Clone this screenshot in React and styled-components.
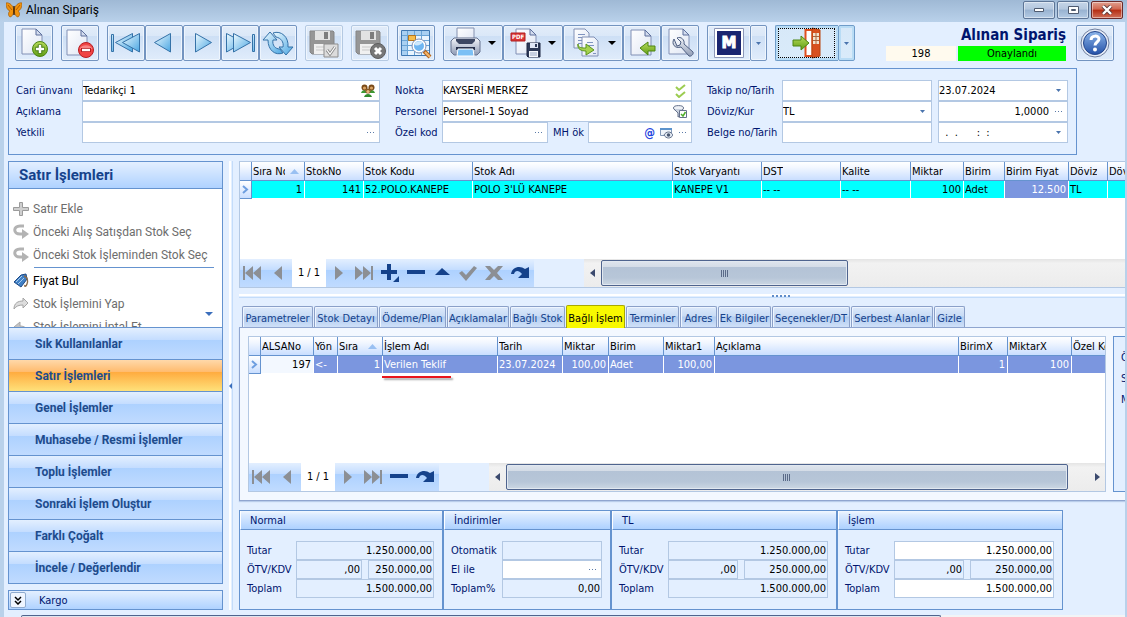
import React from 'react';
import styled, { createGlobalStyle, css } from 'styled-components';

const uiFont = '"DejaVu Sans Condensed", "DejaVu Sans", sans-serif';
const shellFont = 'Roboto, "Noto Sans", sans-serif';

const colors = {
  back: '#e3efff',
  line: '#6593cf',
  field: '#b3c8e3',
  navy: '#00156e',
  frame: '#b9d1ea',
};

const bevel = 'linear-gradient(#e3efff 0%, #c4ddff 38%, #add1ff 39%, #c0dbff 100%)';
const headerFill = 'linear-gradient(#e3efff, #afd2ff)';

const GlobalStyle = createGlobalStyle`
  * { box-sizing: border-box; }
  body {
    margin: 0;
    font: 11px ${uiFont};
    background: ${colors.back};
    overflow: hidden;
  }
  button, input, select { font: inherit; color: inherit; margin: 0; }
  svg { display: block; flex: none; }
`;

const Window = styled.div`
  min-height: 100vh;
  display: flex;
  flex-direction: column;
  background: ${colors.back};
`;

const TitleBar = styled.header`
  height: 22px;
  display: flex;
  align-items: center;
  gap: 4px;
  padding: 0 4px 2px 6px;
  background: linear-gradient(#9fb9d5, #b9d1ea);
  font: 12px ${shellFont};
  color: #000;
`;

const WindowButtons = styled.div`
  margin-left: auto;
  align-self: flex-start;
  display: flex;
  gap: 2px;
  padding-top: 1px;
`;

const WindowButton = styled.button`
  width: 32px;
  height: 18px;
  padding: 0;
  display: flex;
  align-items: center;
  justify-content: center;
  border: 1px solid ${p => (p.$close ? '#6b2a2a' : '#5d7596')};
  border-radius: 2px;
  box-shadow: inset 0 0 0 1px rgba(255, 255, 255, 0.45);
  background: ${p => (p.$close
    ? 'linear-gradient(#e0a090 0%, #d0664f 45%, #b52c12 50%, #d0705a 100%)'
    : 'linear-gradient(#c5d5e8 0%, #b4c7de 45%, #98b2d0 50%, #b4cbe4 100%)')};
`;

const Frame = styled.div`
  flex: 1;
  display: flex;
  flex-direction: column;
  min-width: 0;
  border-left: 4px solid ${colors.frame};
  border-right: 2px solid ${colors.frame};
`;

const Toolbar = styled.div`
  display: flex;
  gap: 8px;
  padding: 3px 11px 7px;
`;

const ToolGroup = styled.div`
  display: flex;
`;

const ToolButton = styled.button`
  width: ${p => p.$width || 38}px;
  height: 36px;
  padding: 0;
  display: flex;
  align-items: center;
  justify-content: center;
  gap: 6px;
  border: 1px solid #7394c0;
  border-radius: 2px;
  background: linear-gradient(#e2ecf9 0%, #dbe8f8 28%, #cddff5 29%, #e0ecfb 100%);
  box-shadow: inset 0 0 0 1px #eef5fd;
  &:disabled { border-color: #b4c9e2; }
  ${p => p.$joined && css`
    border-right-width: 0;
    border-radius: 2px 0 0 2px;
  `}
  ${p => p.$hot && css`
    border-color: #6f9cc9;
    background: linear-gradient(#d7e8f8, #d9ebfa);
    box-shadow: inset 0 0 0 2px #b9dcf5;
  `}
  ${p => p.$focus && css`
    outline: 1px dotted #000;
    outline-offset: -4px;
  `}
`;

const OrderState = styled.div`
  margin-left: auto;
  display: grid;
  grid-template-columns: 70px 108px;
  grid-template-rows: 21px 15px;
  column-gap: 2px;
  margin-right: 2px;
  text-align: center;
  line-height: 16px;
  color: #000;
`;

const OrderTitle = styled.h1`
  grid-column: 1 / 3;
  margin: 0;
  text-align: right;
  font: bold 15px/21px ${uiFont};
  color: ${colors.navy};
`;

const StateCell = styled.output`
  background: ${p => p.$fill};
`;

const FormPanel = styled.form`
  margin: 0 48px 0 4px;
  padding: 11px 8px 11px 7px;
  border: 1px solid ${colors.line};
  display: grid;
  grid-template-columns: 66px 298fr 62px 250fr 90px 150fr 6px 130fr;
  grid-auto-rows: 21px;
  color: ${colors.navy};
`;

const Label = styled.label`
  padding-left: ${p => p.$indent || 0}px;
  line-height: ${p => p.$line || 21}px;
  white-space: nowrap;
`;

const FieldBox = styled.div`
  display: flex;
  align-items: center;
  min-width: 0;
  height: ${p => p.$height || 21}px;
  border: 1px solid ${colors.field};
  background: ${p => (p.$readOnly ? 'transparent' : '#fff')};
  padding-right: ${p => (p.$plain ? 1 : 4)}px;
  gap: 5px;
  color: #000;
  grid-column: ${p => p.$column || 'auto'};
`;

const DropBox = styled(FieldBox)`
  padding-right: 6px;
`;

const fieldText = css`
  flex: 1;
  width: 100%;
  min-width: 0;
  height: 100%;
  border: 0;
  outline: 0;
  padding: 0;
  background: transparent;
`;

const TextInput = styled.input`
  ${fieldText}
  text-align: ${p => p.$align || 'left'};
`;

const SelectInput = styled.select`
  ${fieldText}
  appearance: none;
`;

const IconButton = styled.button`
  padding: 0;
  border: 0;
  background: none;
  display: flex;
  align-items: center;
  justify-content: center;
`;

const AtButton = styled(IconButton)`
  font: bold 12px ${uiFont};
  color: #1f45e0;
`;

const CodeRow = styled.div`
  display: grid;
  grid-template-columns: 106fr 40px 104fr;
`;

const Main = styled.main`
  flex: 1;
  display: flex;
  min-height: 0;
  padding: 6px 0 5px 4px;
`;

const Sidebar = styled.aside`
  width: 215px;
  flex: none;
  display: flex;
  flex-direction: column;
`;

const SideBox = styled.section`
  flex: 1;
  display: flex;
  flex-direction: column;
  border: 1px solid ${colors.line};
  background: #fff;
`;

const SideTitle = styled.h2`
  margin: 0;
  padding-left: 10px;
  border-bottom: 1px solid ${colors.line};
  background: ${headerFill};
  font: bold 15px/26px ${shellFont};
  color: #15428b;
`;

const SideList = styled.div`
  position: relative;
  flex: 1 1 0;
  min-height: 138px;
  overflow: hidden;
  padding: 8px 8px 0 4px;
  font: 12px ${shellFont};
`;

const SideItem = styled.button`
  width: 100%;
  height: 23px;
  padding: 0;
  display: flex;
  align-items: center;
  gap: 3px;
  border: 0;
  background: none;
  white-space: nowrap;
  color: #000;
  &:disabled { color: #6d6d6d; }
`;

const SideRule = styled.hr`
  margin: 1px 0 1px 21px;
  border: 0;
  border-top: 1px solid ${colors.line};
`;

const ScrollMore = styled(IconButton)`
  position: absolute;
  right: 9px;
  bottom: 11px;
`;

const SideGroup = styled.button`
  height: 32px;
  padding: 0 0 0 26px;
  border: 0;
  border-top: 1px solid ${colors.line};
  text-align: left;
  font: bold 12px ${shellFont};
  color: #1e4b8c;
  background: ${p => (p.$active
    ? 'linear-gradient(#ffd9aa 0%, #ffbb6e 38%, #ffab3f 39%, #fee17a 100%)'
    : bevel)};
`;

const Cargo = styled.div`
  margin-top: 6px;
  height: 20px;
  padding-left: 1px;
  display: flex;
  align-items: center;
  gap: 13px;
  border: 1px solid ${colors.line};
  background: ${headerFill};
  color: ${colors.navy};
`;

const CargoToggle = styled(IconButton)`
  width: 16px;
  height: 16px;
  border: 1px solid #8fabcf;
  border-radius: 2px;
  background: #eef5ff;
`;

const VSplit = styled.div`
  width: 16px;
  flex: none;
  display: flex;
  align-items: center;
  padding-left: 6px;
`;

const VSplitBar = styled.div`
  width: 4px;
  height: 100%;
  display: flex;
  align-items: center;
  background: linear-gradient(90deg, #fff 2px, #e3efff 2px, #e3efff 3px, #c3dcfa 3px);
`;

const Content = styled.div`
  flex: 1;
  min-width: 0;
  display: flex;
  flex-direction: column;
`;

const GridBox = styled.section`
  flex: 1 1 ${p => p.$basis}px;
  min-width: 0;
  display: flex;
  flex-direction: column;
  border: 1px solid ${colors.field};
  border-right-width: ${p => (p.$open ? 0 : 1)}px;
  background: #fff;
  overflow: hidden;
`;

const GridBody = styled.div`
  flex: 1;
  overflow: hidden;
`;

const Table = styled.table`
  table-layout: fixed;
  width: 100%;
  border-collapse: separate;
  border-spacing: 0;
  color: #000;
`;

const Col = styled.col`
  width: ${p => p.$width}px;
`;

const Th = styled.th`
  height: 19px;
  padding: 0 0 0 1px;
  border-right: 1px solid ${colors.line};
  border-bottom: 1px solid ${colors.line};
  background: linear-gradient(#fff, #f2f7ff 30%, #c9deff);
  font-weight: normal;
  text-align: left;
  white-space: nowrap;
  overflow: hidden;
`;

const HeadCell = styled.span`
  display: flex;
  align-items: center;
  justify-content: space-between;
  gap: 5px;
  padding-right: ${p => (p.$sorted ? 5 : 0)}px;
`;

const HeadText = styled.span`
  overflow: hidden;
`;

const Td = styled.td`
  height: 18px;
  padding: 0 2px 0 1px;
  border-right: 1px solid ${p => (p.$mark ? colors.line : '#fff')};
  border-bottom: 1px solid ${p => (p.$mark ? colors.line : '#fff')};
  background: ${p => p.$fill};
  color: ${p => (p.$light ? '#fff' : '#000')};
  text-align: ${p => p.$align || 'left'};
  white-space: nowrap;
  overflow: hidden;
`;

const RedMark = styled.div`
  width: 69px;
  height: 2px;
  margin: 2px 0 0 133px;
  background: #e8141c;
  box-shadow: 2px 2px 2px rgba(0, 0, 0, 0.35);
`;

const NavRow = styled.div`
  height: 28px;
  flex: none;
  display: flex;
  background: ${colors.back};
`;

const NavButton = styled.button`
  width: 26px;
  height: 28px;
  padding: 0;
  border: 0;
  display: flex;
  align-items: center;
  justify-content: center;
  background: ${bevel};
`;

const NavCount = styled.span`
  width: 34px;
  line-height: 28px;
  text-align: center;
  background: #fff;
  color: #000;
`;

const ScrollTrack = styled.div`
  flex: 1;
  margin-left: 50px;
  display: grid;
  grid-template-columns: 17px ${p => p.$thumb} 1fr;
  align-items: center;
  padding: 1px 0;
  background: linear-gradient(#e4e4e4, #f2f2f2 15%, #ececec);
`;

const ScrollThumb = styled.div`
  height: 26px;
  display: flex;
  align-items: center;
  justify-content: center;
  border: 1px solid #4f648e;
  border-radius: 2px;
  box-shadow: inset 0 0 0 1px #e1e8f0;
  background: linear-gradient(#dfe5ed 0%, #d3dbe6 26%, #b4c3d6 27%, #b7c6d8 70%, #ccd7e3 100%);
`;

const ArrowButton = styled(IconButton)`
  height: 26px;
  justify-self: ${p => (p.$end ? 'end' : 'stretch')};
  padding: 0 ${p => (p.$end ? 5 : 0)}px;
`;

const HSplit = styled.div`
  height: 17px;
  flex: none;
  padding-top: 6px;
`;

const HSplitBar = styled.div`
  height: 4px;
  display: flex;
  justify-content: center;
  padding-left: 198px;
  background: linear-gradient(#fff 2px, #e3efff 2px, #e3efff 3px, #c3dcfa 3px);
`;

const TabRow = styled.div`
  height: 22px;
  flex: none;
  display: flex;
  align-items: flex-end;
  padding-left: 3px;
`;

const Tab = styled.button`
  width: ${p => p.$width}px;
  height: 21px;
  margin-right: 1px;
  padding: 2px 0 0;
  flex: none;
  white-space: nowrap;
  border: 1px solid #8ba0c8;
  border-bottom: 0;
  border-radius: 2px 2px 0 0;
  box-shadow: inset 1px 1px 0 #eef5ff;
  background: linear-gradient(#dce9fa 0%, #c8dbf5 45%, #b1ccf0 50%, #cfe0f8 100%);
  color: #15428b;
  ${p => p.$active && css`
    position: relative;
    z-index: 1;
    height: 23px;
    margin-bottom: -1px;
    border-color: #a9a900;
    box-shadow: none;
    background: #f8f800;
    color: #000;
  `}
`;

const DetailPanel = styled.div`
  flex: 1 1 174px;
  min-height: 0;
  display: flex;
  gap: 7px;
  padding: 8px 0 8px 8px;
  border: 1px solid #8fa5cf;
  border-right: 0;
  background: #f3f8ff;
  box-shadow: 0 1px 1px #b9cdea;
`;

const SidePeek = styled.div`
  width: 12px;
  flex: none;
  overflow: hidden;
  padding: 10px 0 0 7px;
  border: 1px solid ${colors.line};
  border-right: 0;
  background: ${colors.back};
  color: ${colors.navy};
  line-height: 21px;
`;

const Totals = styled.div`
  flex: none;
  margin: 9px 62px 0 0;
  display: grid;
  grid-template-columns: 204fr 168fr 226fr 226fr;
`;

const TotalBox = styled.fieldset`
  min-width: 0;
  height: 100px;
  margin: 0;
  padding: 0;
  border: 1px solid ${colors.line};
  color: ${colors.navy};
`;

const TotalHead = styled.div`
  height: 19px;
  padding-left: 9px;
  line-height: 19px;
  border-bottom: 1px solid ${colors.line};
  border-left: 1px solid #fff;
  background: linear-gradient(#f2f8ff, #dcebff 20%, #add1ff);
`;

const TotalRows = styled.div`
  display: grid;
  grid-template-columns: ${p => p.$label}px 1fr;
  grid-auto-rows: 19px;
  padding: 11px 8px 11px 7px;
`;

const SplitFields = styled.div`
  display: grid;
  grid-template-columns: ${p => p.$first}fr ${p => p.$second}fr;
  column-gap: 6px;
`;

const BottomScroll = styled.div`
  height: 2px;
  margin-left: 17px;
  display: grid;
  grid-template-columns: 919fr 184fr;
  background: #f2f4f6;
`;

const BottomThumb = styled.div`
  border: 1px solid #4f648e;
  border-bottom: 0;
  border-radius: 2px 2px 0 0;
  background: #dfe5ed;
`;

const HiddenSvg = styled.svg`
  position: absolute;
`;

/* ---------- icons ---------- */

const Gradients = () => (
  <HiddenSvg width="0" height="0" aria-hidden="true">
    <defs>
      <linearGradient id="sky" x1="0" y1="0" x2="1" y2="1">
        <stop offset="0" stopColor="#eefaff" />
        <stop offset="1" stopColor="#4aa6e2" />
      </linearGradient>
      <linearGradient id="paper" x1="0" y1="0" x2="1" y2="1">
        <stop offset="0" stopColor="#fff" />
        <stop offset="1" stopColor="#dfe6f4" />
      </linearGradient>
      <linearGradient id="green" x1="0" y1="0" x2="0" y2="1">
        <stop offset="0" stopColor="#b9dc5c" />
        <stop offset="1" stopColor="#5f9c12" />
      </linearGradient>
      <linearGradient id="steel" x1="0" y1="0" x2="0" y2="1">
        <stop offset="0" stopColor="#f4f6fa" />
        <stop offset="1" stopColor="#8d9ab5" />
      </linearGradient>
      <linearGradient id="ball" x1="0" y1="0" x2="0" y2="1">
        <stop offset="0" stopColor="#8db6ea" />
        <stop offset="1" stopColor="#2451a8" />
      </linearGradient>
    </defs>
  </HiddenSvg>
);

const Svg = ({ w = 32, h = w, children }) => (
  <svg width={w} height={h} viewBox={`0 0 ${w} ${h}`} fill="none" aria-hidden="true">
    {children}
  </svg>
);

const Page = ({ x = 5, y = 2 }) => (
  <g transform={`translate(${x} ${y})`}>
    <path d="M1 1h14l6 6v19H1z" fill="url(#paper)" stroke="#8190b5" />
    <path d="M15 1v6h6z" fill="#d3dcee" stroke="#5d6f9c" />
  </g>
);

const Butterfly = () => (
  <Svg w={16}>
    <path d="M8 7C6 2 2 0 0 1c0 4 1 7 4 8-2 1-2 5 0 6 2 0 3-3 4-5z" fill="#f0930f" stroke="#9a5200" strokeWidth=".6" />
    <path d="M8 7c2-5 6-7 8-6 0 4-1 7-4 8 2 1 2 5 0 6-2 0-3-3-4-5z" fill="#f0930f" stroke="#9a5200" strokeWidth=".6" />
    <path d="M2 3l4 5M14 3l-4 5" stroke="#b65c00" />
    <path d="M8 4v9" stroke="#3b1d00" strokeWidth="1.4" />
  </Svg>
);

const AddPage = () => (
  <Svg>
    <Page x={3} y={1} />
    <circle cx="22" cy="22" r="7.5" fill="url(#green)" stroke="#4d8512" />
    <path d="M22 17.500v9M17.500 22h9" stroke="#3f7512" strokeWidth="4.500" />
    <path d="M22 18v8M18 22h8" stroke="#fff" strokeWidth="2.500" />
  </Svg>
);

const RemovePage = () => (
  <Svg>
    <Page x={2} y={2} />
    <circle cx="22" cy="23" r="7.5" fill="#f04444" stroke="#b81d22" />
    <path d="M15.500 22a7 6 0 0 1 13 0z" fill="#f98585" />
    <path d="M17 23h10" stroke="#b81d22" strokeWidth="4" />
    <path d="M18 23h8" stroke="#fff" strokeWidth="2.400" />
  </Svg>
);

const arrowProps = { fill: 'url(#sky)', stroke: '#3572a8', strokeWidth: 1, strokeLinejoin: 'round' };

const FirstIcon = () => (
  <Svg>
    <path d="M1.500 7.500h2v17h-2z" {...arrowProps} />
    <path d="M22.500 6.500v18.500L5.500 15.500z" {...arrowProps} />
    <path d="M29.500 6.500v18.500L12.500 15.500z" {...arrowProps} />
  </Svg>
);

const PrevIcon = () => (
  <Svg><path d="M22.500 6.500v18.500L6.500 15.500z" {...arrowProps} /></Svg>
);

const NextIcon = () => (
  <Svg><path d="M9.500 6.500v18.500l16-9.500z" {...arrowProps} /></Svg>
);

const LastIcon = () => (
  <Svg>
    <path d="M2.500 6.500v18.500l17-9.500z" {...arrowProps} />
    <path d="M9.500 6.500v18.500l17-9.500z" {...arrowProps} />
    <path d="M28.500 7.500h2v17h-2z" {...arrowProps} />
  </Svg>
);

const RefreshIcon = () => (
  <Svg>
    <path d="M8 5l7 8h-4c-1 5 2 9 7 9l3 4c-8 3-15-3-15-13H1z" {...arrowProps} />
    <path d="M24 28l-7-8h4c1-5-2-9-7-10l-3-4c8-3 16 4 15 14h5z" {...arrowProps} />
  </Svg>
);

const GreyDisk = () => (
  <g>
    <path d="M2 4h23l1 1v22H4l-2-2z" fill="#969696" stroke="#858585" />
    <path d="M7 4h15v9H7z" fill="#e2e2e2" />
    <path d="M16 5h4v7h-4z" fill="#7d7d7d" />
    <path d="M6 17h17v10H6z" fill="#f0f0f0" />
    <path d="M8 20h13M8 23h13" stroke="#c8c8c8" />
  </g>
);

const SaveCheckIcon = () => (
  <Svg>
    <GreyDisk />
    <path d="M16 17h14v13H16z" fill="#dcdcdc" stroke="#8d8d8d" />
    <path d="M19 23l3 4 5-7" stroke="#8b8b8b" strokeWidth="3" />
    <path d="M19 23l3 4 5-7" stroke="#fff" strokeWidth="1.200" />
  </Svg>
);

const SaveCancelIcon = () => (
  <Svg>
    <GreyDisk />
    <circle cx="24" cy="24" r="7.500" fill="#777" stroke="#5e5e5e" />
    <path d="M21 21l6 6M27 21l-6 6" stroke="#fff" strokeWidth="3" />
  </Svg>
);

const GridSearchIcon = () => (
  <Svg>
    <path d="M1.500 3.500h28v25h-28z" fill="#eaf5ff" stroke="#3f78b3" />
    <path d="M2 4h27v4H2zM2 4h5v24H2z" fill="#a9d0f2" />
    <path d="M2 8.500h27M2 13.500h27M2 18.500h27M2 23.500h27M7.500 4v24M14.500 4v24M21.500 4v24" stroke="#6aa4d6" />
    <path d="M8.500 8.500h7v5h-7z" fill="#f6bd4c" stroke="#b7761c" />
    <path d="M24 24l6 6" stroke="#b5651d" strokeWidth="4" />
    <path d="M25 25l5 5" stroke="#f2b66d" strokeWidth="2" />
    <circle cx="19" cy="19" r="6" fill="#6fb6f2" stroke="#fff" strokeWidth="2" />
    <circle cx="19" cy="19" r="7" stroke="#7f90b5" />
    <path d="M14.500 18a5 4 0 0 1 8-3c-1 3-5 4-8 3z" fill="#d0e9fd" />
  </Svg>
);

const PrinterIcon = () => (
  <Svg>
    <path d="M7 1h17v13H7z" fill="url(#paper)" stroke="#8592b0" />
    <path d="M1 14l3-3h23l3 3v11l-3 3H4l-3-3z" fill="url(#steel)" stroke="#66738f" />
    <path d="M6 12v2l3 3h13l3-3v-2z" fill="#3c4763" />
    <path d="M6 20h19v3H6z" fill="#27314d" />
    <path d="M8 22h15l1 7H7z" fill="#7cc0f5" stroke="#fff" />
  </Svg>
);

const PdfIcon = () => (
  <Svg>
    <Page x={5} y={1} />
    <path d="M1 6h14v8H1z" fill="#d93636" stroke="#b31e1e" />
    <text x="2" y="12" fontFamily="DejaVu Sans Condensed" fontSize="6" fontWeight="bold" fill="#fff">PDF</text>
    <path d="M17 16h13v14H18l-1-1z" fill="#2d3957" stroke="#1c2540" />
    <path d="M20 16h8v5h-8z" fill="#dfe6f5" />
    <path d="M25 17h2v3h-2z" fill="#2d3957" />
    <path d="M19 24h9v6h-9z" fill="#f4f7fc" />
    <path d="M20 26h7M20 28h7" stroke="#9aa8c6" />
  </Svg>
);

const CopyIcon = () => (
  <Svg>
    <path d="M4 2h11l4 4v15H4z" fill="url(#paper)" stroke="#8190b5" />
    <path d="M8 7.500h7M8 10.500h7M8 13.500h6M8 16.500h4" stroke="#7f93bf" />
    <path d="M12 10h12l4 4v15H12z" fill="url(#paper)" stroke="#8190b5" />
    <path d="M17 15.500h6M17 18.500h7M23 26.500h3" stroke="#7f93bf" />
    <path d="M8 17c0 4 4 4 8 4v-4l8 6-8 5v-4c-5 0-9-2-8-7z" fill="#a6d24f" stroke="#5b951b" />
  </Svg>
);

const ImportIcon = () => (
  <Svg>
    <Page x={4} y={2} />
    <path d="M14 21l8-6v4h7v5h-7v4z" fill="url(#green)" stroke="#4d8512" strokeLinejoin="round" />
  </Svg>
);

const WrenchPageIcon = () => (
  <Svg>
    <Page x={4} y={1} />
    <path
      d="M10 12c-3 5 1 10 7 8l8 9c2 1 5-2 4-4l-9-8c1-4-3-8-7-6l4 4-1 3-3 1z"
      fill="url(#steel)"
      stroke="#4e5f82"
      strokeLinejoin="round"
    />
  </Svg>
);

const MIcon = () => (
  <Svg>
    <path d="M1.500 1.500h29v29h-29z" fill="#fff" stroke="#8b96b8" />
    <path d="M4 4h24v24H4z" fill="#1a2570" />
    <text x="16" y="21" textAnchor="middle" fontFamily="DejaVu Sans" fontSize="15" fontWeight="bold" fill="#fff" stroke="#fff">M</text>
  </Svg>
);

const DoorIcon = () => (
  <Svg>
    <path d="M14.500 3h7v26h-7z" fill="#fff" stroke="#e05020" strokeWidth="2" />
    <path d="M21 1l8 2v26l-8 2z" fill="#d8501e" stroke="#b8440f" />
    <path d="M22 6h6v11h-6z" fill="#f2e2cd" />
    <path d="M25 6v11M22 9.500h6M22 13.500h6" stroke="#a9653f" />
    <path d="M2 13h8V9l8 7-8 7v-4H2z" fill="url(#green)" stroke="#4d8512" strokeLinejoin="round" />
  </Svg>
);

const HelpIcon = () => (
  <Svg>
    <circle cx="16" cy="16" r="14" fill="#e6ecf7" stroke="#71809f" />
    <circle cx="16" cy="16" r="11.500" fill="url(#ball)" stroke="#24468c" />
    <path d="M12 13c0-5 8-5 8-1 0 3-4 3-4 6.500" stroke="#fff" strokeWidth="3" />
    <circle cx="16" cy="22.500" r="2" fill="#fff" />
  </Svg>
);

const Triangle = ({ color = '#4a74ad', w = 5 }) => (
  <Svg w={w} h={w === 5 ? 3 : 4}>
    <path d={w === 5 ? 'M0 0h5L2.500 3z' : `M0 0h${w}L${w / 2} 4z`} fill={color} />
  </Svg>
);

const Dots = () => (
  <Svg w={9} h={3}>
    <path d="M1 1h1v1H1zM4 1h1v1H4zM7 1h1v1H7z" fill="#5b7ba8" />
  </Svg>
);

const PeopleIcon = () => (
  <Svg w={14} h={13}>
    <path d="M0 9c1-4 6-4 7 0zM7 9c1-4 6-4 7 0z" fill="#3d9a35" />
    <circle cx="3.500" cy="3.500" r="3" fill="#7a4a18" />
    <circle cx="10.500" cy="3.500" r="3" fill="#7a4a18" />
    <circle cx="3.500" cy="4" r="1.600" fill="#d9a262" />
    <circle cx="10.500" cy="4" r="1.600" fill="#d9a262" />
    <path d="M3 13c1-4 7-4 8 0z" fill="#2f8a2c" />
    <circle cx="7" cy="7" r="2.600" fill="#8a5a24" />
    <circle cx="7" cy="7.500" r="1.600" fill="#e8b97e" />
  </Svg>
);

const ChecksIcon = () => (
  <Svg w={12} h={14}>
    <path d="M1 3l3 3 6-5M1 10l3 3 6-5" stroke="#9ccc50" strokeWidth="2" />
  </Svg>
);

const FilterCheckIcon = () => (
  <Svg w={14} h={13}>
    <ellipse cx="5.500" cy="3" rx="5" ry="2.400" fill="#eef1f6" stroke="#65718b" />
    <path d="M1 4l4 4v4l2-1V8l3-4" fill="#c9d1de" stroke="#65718b" />
    <path d="M6.500 5.500h7v7h-7z" fill="#fff" stroke="#65718b" />
    <path d="M8 9l2 2 2.500-4" stroke="#4fae2a" strokeWidth="1.500" />
  </Svg>
);

const ViewIcon = () => (
  <Svg w={13} h={12}>
    <path d="M.5 1.500h11v7H.5z" fill="#eff4fa" stroke="#8299b8" />
    <path d="M0 1h12v2H0z" fill="#5c93cc" />
    <path d="M4 8c2-4 7-4 9 0-2 4-7 4-9 0z" fill="#dfe6f0" stroke="#65738d" />
    <circle cx="8.500" cy="8" r="1.700" fill="#47556f" />
  </Svg>
);

const PlusGreyIcon = () => (
  <Svg w={17} h={16}>
    <path d="M6.500 1.500h3v5h6v3h-6v5h-3v-5h-6v-3h6z" fill="#cfcfcf" stroke="#9b9b9b" />
  </Svg>
);

const ReturnIcon = () => (
  <Svg w={17} h={16}>
    <path d="M11 2H7C0 2 0 10 7 10h3" stroke="#b3b3b3" strokeWidth="3" />
    <path d="M9 5l7 5-7 5z" fill="#b3b3b3" />
  </Svg>
);

const TagIcon = () => (
  <Svg w={17} h={16}>
    <path d="M1 9l7-7 5-1 1 5-6 8z" fill="#3f7fc4" stroke="#1f4a86" />
    <path d="M3 9l6-6M5 11l6-6" stroke="#a9cdf0" />
    <path d="M11 3c4 1 4 6 3 8-1 3-3 3-2 1" stroke="#8a6a4a" strokeWidth="1.400" />
  </Svg>
);

const ForwardIcon = () => (
  <Svg w={17} h={16}>
    <path d="M1 13c0-6 4-8 9-8V2l5 5-5 5V9C6 9 3 10 1 13z" fill="#ddd" stroke="#a5a5a5" />
  </Svg>
);

const BackIcon = () => (
  <Svg w={17} h={16}>
    <path d="M15 15c0-6-4-8-8-8V3L1 8l6 5v-3c4 0 6 1 8 5z" fill="#c4c4c4" stroke="#a9a9a9" />
  </Svg>
);

const SortIcon = () => (
  <Svg w={9} h={5}><path d="M4.500 0L9 5H0z" fill="#99c0f2" /></Svg>
);

const MarkIcon = () => (
  <Svg w={8} h={9}><path d="M2 1l4 3.500L2 8" stroke="#6d9ee0" strokeWidth="2" /></Svg>
);

const GREY = '#8c8f94';
const BLUE = '#15428b';

const navShapes = {
  first: <path d="M0 3h2v14H0zM10 3v14L2 10zM18 3v14l-8-7z" fill={GREY} />,
  prev: <path d="M13 3v14l-8-7z" fill={GREY} />,
  next: <path d="M6 3v14l8-7z" fill={GREY} />,
  last: <path d="M0 3v14l8-7zM8 3v14l8-7zM16 3h2v14h-2z" fill={GREY} />,
  add: <path d="M6 1h4v6h6v4h-6v6H6v-6H0V7h6zM18 13v6h-6z" fill={BLUE} />,
  remove: <path d="M0 7h18v4H0z" fill={BLUE} />,
  edit: <path d="M9 5l8 7H2z" fill={BLUE} />,
  post: <path d="M0 10l3-2 4 4 8-9 3 2L7 18z" fill={GREY} />,
  cancel: <path d="M0 3h5l4 4 4-4h5l-6 7 6 7h-5l-4-4-4 4H0l6-7z" fill={GREY} />,
  reload: <path d="M0 11C1 4 9 2 14 6l4-2v11H7l4-4C8 7 4 7 3 11z" fill={BLUE} />,
};

const NavIcon = ({ name }) => <Svg w={20}>{navShapes[name]}</Svg>;

/* ---------- pieces ---------- */

const Navigator = ({ actions, thumb, endArrow }) => (
  <NavRow>
    {['first', 'prev'].map(n => <NavButton key={n} aria-label={n}><NavIcon name={n} /></NavButton>)}
    <NavCount>1 / 1</NavCount>
    {['next', 'last', ...actions].map(n => (
      <NavButton key={n} aria-label={n}><NavIcon name={n} /></NavButton>
    ))}
    <ScrollTrack $thumb={thumb}>
      <ArrowButton aria-label="left"><Svg w={5} h={8}><path d="M5 0v8L0 4z" fill="#3b4a6e" /></Svg></ArrowButton>
      <ScrollThumb>
        <Svg w={8} h={7}><path d="M.5 0v7M2.500 0v7M4.500 0v7M6.500 0v7" stroke="#5a6a88" /></Svg>
      </ScrollThumb>
      {endArrow && (
        <ArrowButton $end aria-label="right"><Svg w={5} h={8}><path d="M0 0v8l5-4z" fill="#3b4a6e" /></Svg></ArrowButton>
      )}
    </ScrollTrack>
  </NavRow>
);

const DataGrid = ({ columns }) => (
  <Table>
    <colgroup>
      <Col $width={12} />
      {columns.map(c => <Col key={c.title} $width={c.width} />)}
    </colgroup>
    <thead>
      <tr>
        <Th />
        {columns.map(c => (
          <Th key={c.title}>
            <HeadCell $sorted={c.sorted}>
              <HeadText>{c.title}</HeadText>
              {c.sorted && <SortIcon />}
            </HeadCell>
          </Th>
        ))}
      </tr>
    </thead>
    <tbody>
      <tr>
        <Td $mark $fill="linear-gradient(#fff, #c9deff)"><MarkIcon /></Td>
        {columns.map(c => (
          <Td key={c.title} $fill={c.fill} $light={c.light} $align={c.align}>{c.value}</Td>
        ))}
      </tr>
    </tbody>
  </Table>
);

const CYAN = '#00ffff';
const PICK = '#7b96df';

const orderColumns = [
  { title: 'Sıra No', width: 53, value: '1', align: 'right', sorted: true },
  { title: 'StokNo', width: 59, value: '141', align: 'right' },
  { title: 'Stok Kodu', width: 109, value: '52.POLO.KANEPE' },
  { title: 'Stok Adı', width: 200, value: "POLO 3'LÜ KANEPE" },
  { title: 'Stok Varyantı', width: 89, value: 'KANEPE V1' },
  { title: 'DST', width: 79, value: '-- --' },
  { title: 'Kalite', width: 70, value: '-- --' },
  { title: 'Miktar', width: 53, value: '100', align: 'right' },
  { title: 'Birim', width: 41, value: 'Adet' },
  { title: 'Birim Fiyat', width: 64, value: '12.500', align: 'right', fill: PICK, light: true },
  { title: 'Döviz', width: 39, value: 'TL' },
  { title: 'Döviz Kuru', width: 60, value: '' },
].map(c => ({ fill: CYAN, ...c }));

const linkColumns = [
  { title: 'ALSANo', width: 53, value: '197', align: 'right', fill: '#f3f8ff', light: false },
  { title: 'Yön', width: 24, value: '<-' },
  { title: 'Sıra', width: 45, value: '1', align: 'right', sorted: true },
  { title: 'İşlem Adı', width: 115, value: 'Verilen Teklif' },
  { title: 'Tarih', width: 65, value: '23.07.2024' },
  { title: 'Miktar', width: 46, value: '100,00', align: 'right' },
  { title: 'Birim', width: 55, value: 'Adet' },
  { title: 'Miktar1', width: 51, value: '100,00', align: 'right' },
  { title: 'Açıklama', width: 244, value: '' },
  { title: 'BirimX', width: 49, value: '1', align: 'right' },
  { title: 'MiktarX', width: 64, value: '100', align: 'right' },
  { title: 'Özel Kod', width: 60, value: '' },
].map(c => ({ fill: PICK, light: true, ...c }));

const tabs = [
  ['Parametreler', 71], ['Stok Detayı', 64], ['Ödeme/Plan', 67], ['Açıklamalar', 62],
  ['Bağlı Stok', 55], ['Bağlı İşlem', 59], ['Terminler', 53], ['Adres', 37],
  ['Ek Bilgiler', 53], ['Seçenekler/DT', 78], ['Serbest Alanlar', 82], ['Gizle', 31],
];

const sideGroups = [
  'Sık Kullanılanlar', 'Satır İşlemleri', 'Genel İşlemler', 'Muhasebe / Resmi İşlemler',
  'Toplu İşlemler', 'Sonraki İşlem Oluştur', 'Farklı Çoğalt', 'İncele / Değerlendir',
];

const ReadField = ({ id, value, label, editable, children }) => (
  <FieldBox $height={19} $plain={!children} $readOnly={!editable}>
    <TextInput id={id} aria-label={label} $align="right" readOnly={!editable} defaultValue={value} />
    {children}
  </FieldBox>
);

const TotalGroup = ({ id, title, first, second, editable }) => (
  <TotalBox>
    <TotalHead>{title}</TotalHead>
    <TotalRows $label={49}>
      <Label htmlFor={`${id}-sum`} $line={19}>Tutar</Label>
      <ReadField id={`${id}-sum`} value="1.250.000,00" editable={editable} />
      <Label htmlFor={`${id}-tax`} $line={19}>ÖTV/KDV</Label>
      <SplitFields $first={first} $second={second}>
        <ReadField id={`${id}-tax`} value=",00" />
        <ReadField label="KDV" value="250.000,00" />
      </SplitFields>
      <Label htmlFor={`${id}-total`} $line={19}>Toplam</Label>
      <ReadField id={`${id}-total`} value="1.500.000,00" editable={editable} />
    </TotalRows>
  </TotalBox>
);

const DropTool = ({ label, children }) => (
  <ToolButton $width={60} aria-label={label}>
    {children}
    <Triangle color="#000" w={8} />
  </ToolButton>
);

const MainToolbar = () => (
  <Toolbar>
    <ToolButton aria-label="Yeni"><AddPage /></ToolButton>
    <ToolButton aria-label="Sil"><RemovePage /></ToolButton>
    <ToolGroup>
      <ToolButton aria-label="İlk"><FirstIcon /></ToolButton>
      <ToolButton aria-label="Önceki"><PrevIcon /></ToolButton>
      <ToolButton aria-label="Sonraki"><NextIcon /></ToolButton>
      <ToolButton aria-label="Son"><LastIcon /></ToolButton>
      <ToolButton aria-label="Yenile"><RefreshIcon /></ToolButton>
    </ToolGroup>
    <ToolButton disabled aria-label="Kaydet"><SaveCheckIcon /></ToolButton>
    <ToolButton disabled aria-label="İptal"><SaveCancelIcon /></ToolButton>
    <ToolButton aria-label="Liste"><GridSearchIcon /></ToolButton>
    <ToolGroup>
      <DropTool label="Yazdır"><PrinterIcon /></DropTool>
      <DropTool label="PDF"><PdfIcon /></DropTool>
      <DropTool label="Kopyala"><CopyIcon /></DropTool>
      <ToolButton aria-label="Aktar"><ImportIcon /></ToolButton>
      <ToolButton aria-label="Ayarlar"><WrenchPageIcon /></ToolButton>
    </ToolGroup>
    <ToolGroup>
      <ToolButton $width={43} $joined aria-label="M"><MIcon /></ToolButton>
      <ToolButton $width={17} aria-label="M seçenekleri"><Triangle /></ToolButton>
    </ToolGroup>
    <ToolGroup>
      <ToolButton $width={63} $joined $hot $focus aria-label="Çıkış"><DoorIcon /></ToolButton>
      <ToolButton $width={17} $hot aria-label="Çıkış seçenekleri"><Triangle /></ToolButton>
    </ToolGroup>
    <OrderState>
      <OrderTitle>Alınan Sipariş</OrderTitle>
      <StateCell $fill="#fffaee">198</StateCell>
      <StateCell $fill="#00ff00">Onaylandı</StateCell>
    </OrderState>
    <ToolButton aria-label="Yardım"><HelpIcon /></ToolButton>
  </Toolbar>
);

const OrderForm = () => (
  <FormPanel>
    <Label htmlFor="cari">Cari ünvanı</Label>
    <FieldBox>
      <TextInput id="cari" defaultValue="Tedarikçi 1" />
      <IconButton type="button" aria-label="Cari seç"><PeopleIcon /></IconButton>
    </FieldBox>
    <Label htmlFor="nokta" $indent={15}>Nokta</Label>
    <FieldBox>
      <TextInput id="nokta" defaultValue="KAYSERİ MERKEZ" />
      <IconButton type="button" aria-label="Nokta seç"><ChecksIcon /></IconButton>
    </FieldBox>
    <Label htmlFor="takip" $indent={15}>Takip no/Tarih</Label>
    <FieldBox><TextInput id="takip" /></FieldBox>
    <DropBox $column="8">
      <SelectInput aria-label="Takip tarihi"><option>23.07.2024</option></SelectInput>
      <Triangle />
    </DropBox>

    <Label htmlFor="aciklama">Açıklama</Label>
    <FieldBox><TextInput id="aciklama" /></FieldBox>
    <Label htmlFor="personel" $indent={15}>Personel</Label>
    <FieldBox>
      <TextInput id="personel" defaultValue="Personel-1 Soyad" />
      <IconButton type="button" aria-label="Personel seç"><FilterCheckIcon /></IconButton>
    </FieldBox>
    <Label htmlFor="doviz" $indent={15}>Döviz/Kur</Label>
    <DropBox>
      <SelectInput id="doviz"><option>TL</option></SelectInput>
      <Triangle />
    </DropBox>
    <FieldBox $column="8">
      <TextInput aria-label="Kur" $align="right" defaultValue="1,0000" />
      <IconButton type="button" aria-label="Kur seç"><Dots /></IconButton>
    </FieldBox>

    <Label htmlFor="yetkili">Yetkili</Label>
    <FieldBox>
      <TextInput id="yetkili" />
      <IconButton type="button" aria-label="Yetkili seç"><Dots /></IconButton>
    </FieldBox>
    <Label htmlFor="ozel" $indent={15}>Özel kod</Label>
    <CodeRow>
      <FieldBox>
        <TextInput id="ozel" />
        <IconButton type="button" aria-label="Özel kod seç"><Dots /></IconButton>
      </FieldBox>
      <Label htmlFor="mh" $indent={5}>MH ök</Label>
      <FieldBox>
        <TextInput id="mh" />
        <AtButton type="button">@</AtButton>
        <IconButton type="button" aria-label="Göster"><ViewIcon /></IconButton>
        <IconButton type="button" aria-label="MH seç"><Dots /></IconButton>
      </FieldBox>
    </CodeRow>
    <Label htmlFor="belge" $indent={15}>Belge no/Tarih</Label>
    <FieldBox><TextInput id="belge" /></FieldBox>
    <DropBox $column="8">
      <SelectInput aria-label="Belge tarihi">
        <option>{'\u00a0\u00a0.\u00a0\u00a0.\u00a0\u00a0\u00a0\u00a0\u00a0\u00a0:\u00a0\u00a0:'}</option>
      </SelectInput>
      <Triangle />
    </DropBox>
  </FormPanel>
);

const SidePanel = () => (
  <Sidebar>
    <SideBox>
      <SideTitle>Satır İşlemleri</SideTitle>
      <SideList>
        <SideItem disabled><PlusGreyIcon />Satır Ekle</SideItem>
        <SideItem disabled><ReturnIcon />Önceki Alış Satışdan Stok Seç</SideItem>
        <SideItem disabled><ReturnIcon />Önceki Stok İşleminden Stok Seç</SideItem>
        <SideRule />
        <SideItem><TagIcon />Fiyat Bul</SideItem>
        <SideItem disabled><ForwardIcon />Stok İşlemini Yap</SideItem>
        <SideItem disabled><BackIcon />Stok İşlemini İptal Et</SideItem>
        <ScrollMore aria-label="Aşağı"><Triangle w={8} color="#3a6ebc" /></ScrollMore>
      </SideList>
      {sideGroups.map((name, i) => <SideGroup key={name} $active={i === 1}>{name}</SideGroup>)}
    </SideBox>
    <Cargo>
      <CargoToggle aria-label="Kargo aç">
        <Svg w={8} h={9}><path d="M1 1l3 3 3-3M1 5l3 3 3-3" stroke="#000" strokeWidth="1.500" /></Svg>
      </CargoToggle>
      Kargo
    </Cargo>
  </Sidebar>
);

const App = () => (
  <Window>
    <GlobalStyle />
    <Gradients />
    <TitleBar>
      <Butterfly />
      Alınan Sipariş
      <WindowButtons>
        <WindowButton aria-label="Küçült">
          <Svg w={12} h={6}><path d="M1.500 1.500h9v3h-9z" fill="#fff" stroke="#4e5b70" /></Svg>
        </WindowButton>
        <WindowButton aria-label="Büyüt">
          <Svg w={11} h={9}><path d="M.5.5h10v7H.5z" fill="#fff" stroke="#4e5b70" /><path d="M3.500 3.500h4v1h-4z" stroke="#4e5b70" /></Svg>
        </WindowButton>
        <WindowButton $close aria-label="Kapat">
          <Svg w={12} h={10}>
            <path d="M2 1l8 8M10 1L2 9" stroke="#5b3838" strokeWidth="4" />
            <path d="M2 1l8 8M10 1L2 9" stroke="#fff" strokeWidth="2.400" />
          </Svg>
        </WindowButton>
      </WindowButtons>
    </TitleBar>
    <Frame>
      <MainToolbar />
      <OrderForm />
      <Main>
        <SidePanel />
        <VSplit>
          <VSplitBar><Svg w={4} h={6}><path d="M3 0v6L0 3z" fill="#3a6ebc" /></Svg></VSplitBar>
        </VSplit>
        <Content>
          <GridBox $basis={127} $open>
            <GridBody><DataGrid columns={orderColumns} /></GridBody>
            <Navigator actions={['add', 'remove', 'edit', 'post', 'cancel', 'reload']} thumb="247px" />
          </GridBox>
          <HSplit>
            <HSplitBar>
              <Svg w={20} h={4}><path d="M1 2h18" stroke="#5f8cc9" strokeWidth="2" strokeDasharray="2 2" /></Svg>
            </HSplitBar>
          </HSplit>
          <TabRow role="tablist">
            {tabs.map(([name, width]) => (
              <Tab key={name} role="tab" $width={width} $active={name === 'Bağlı İşlem'}>{name}</Tab>
            ))}
          </TabRow>
          <DetailPanel>
            <GridBox $basis={0}>
              <GridBody>
                <DataGrid columns={linkColumns} />
                <RedMark />
              </GridBody>
              <Navigator actions={['remove', 'reload']} thumb="562px" endArrow />
            </GridBox>
            <SidePeek>
              <div>Ö</div>
              <div>S</div>
              <div>M</div>
            </SidePeek>
          </DetailPanel>
          <Totals>
            <TotalGroup id="normal" title="Normal" first={66} second={66} />
            <TotalBox>
              <TotalHead>İndirimler</TotalHead>
              <TotalRows $label={51}>
                <Label htmlFor="auto" $line={19}>Otomatik</Label>
                <ReadField id="auto" value="" />
                <Label htmlFor="manual" $line={19}>El ile</Label>
                <ReadField id="manual" value="" editable>
                  <IconButton type="button" aria-label="El ile seç"><Dots /></IconButton>
                </ReadField>
                <Label htmlFor="percent" $line={19}>Toplam%</Label>
                <ReadField id="percent" value="0,00" />
              </TotalRows>
            </TotalBox>
            <TotalGroup id="tl" title="TL" first={70} second={84} />
            <TotalGroup id="islem" title="İşlem" first={70} second={84} editable />
          </Totals>
        </Content>
      </Main>
      <BottomScroll><BottomThumb /></BottomScroll>
    </Frame>
  </Window>
);

export default App;
